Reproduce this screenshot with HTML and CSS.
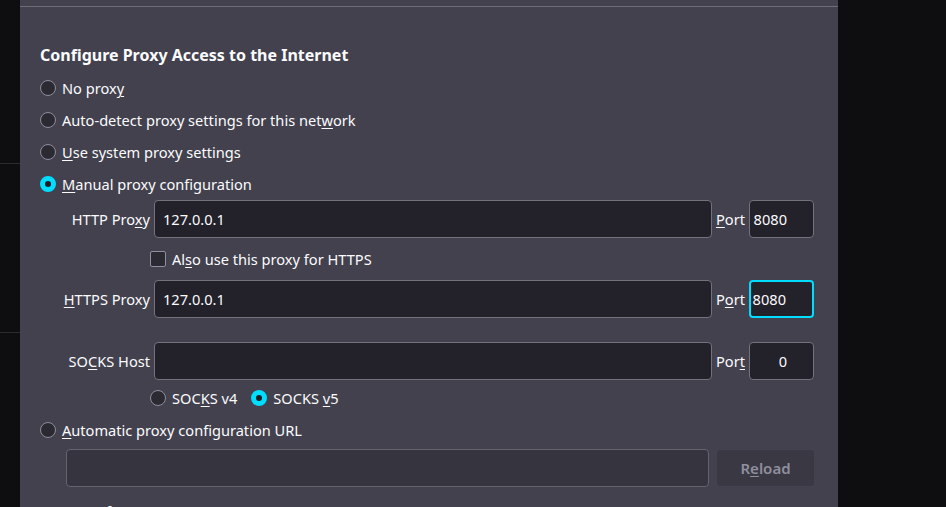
FILE: index.html
```html
<!DOCTYPE html>
<html lang="en">
<head>
    <meta charset="UTF-8">
    <meta name="viewport" content="width=device-width, initial-scale=1.0">
    <title>Connection Settings</title>
    <link rel="stylesheet" href="styles.css">
</head>
<body>
    <div class="page">
        <div class="gutter">
            <div class="gutter-row"></div>
            <div class="gutter-row"></div>
        </div>
        <div class="dialog">
            <div class="topbar"></div>
            <div class="content">
                <h2 class="title">Configure Proxy Access to the Internet</h2>
                <div class="options">
                    <label class="option"><span class="radio"></span><span>No prox<u>y</u></span></label>
                    <label class="option"><span class="radio"></span><span>Auto-detect proxy settings for this net<u>w</u>ork</span></label>
                    <label class="option"><span class="radio"></span><span><u>U</u>se system proxy settings</span></label>
                    <label class="option"><span class="radio checked"></span><span><u>M</u>anual proxy configuration</span></label>
                </div>
                <div class="proxy-grid">
                    <span class="field-label">HTTP Pro<u>x</u>y</span>
                    <div class="input">127.0.0.1</div>
                    <span class="port-label"><u>P</u>ort</span>
                    <div class="input port">8080</div>

                    <label class="check-row"><span class="checkbox"></span><span>Al<u>s</u>o use this proxy for HTTPS</span></label>

                    <span class="field-label"><u>H</u>TTPS Proxy</span>
                    <div class="input">127.0.0.1</div>
                    <span class="port-label">P<u>o</u>rt</span>
                    <div class="input port focused"><span>8080</span><span class="caret"></span></div>

                    <div class="spacer"></div>

                    <span class="field-label">SO<u>C</u>KS Host</span>
                    <div class="input"></div>
                    <span class="port-label">Por<u>t</u></span>
                    <div class="input port">0</div>

                    <div class="socks-row">
                        <label class="option small"><span class="radio"></span><span>SOC<u>K</u>S v4</span></label>
                        <label class="option small"><span class="radio checked"></span><span>SOCKS <u>v</u>5</span></label>
                    </div>
                </div>
                <label class="option auto"><span class="radio"></span><span><u>A</u>utomatic proxy configuration URL</span></label>
                <div class="url-row">
                    <div class="input disabled"></div>
                    <button class="reload">R<u>e</u>load</button>
                </div>
                <p class="no-proxy">No proxy for</p>
            </div>
        </div>
    </div>
</body>
</html>
```

FILE: styles.css
```css
html, body {
    margin: 0;
    padding: 0;
    height: 100%;
    overflow: hidden;
}
body {
    background-color: #0e0e10;
    color: #fbfbfe;
    font-family: "Noto Sans", "DejaVu Sans", sans-serif;
    font-size: 14.6px;
}
u {
    text-decoration-thickness: 1px;
    text-underline-offset: 2px;
}
.page {
    display: flex;
    height: 507px;
}
.gutter {
    width: 20px;
    padding-top: 163px;
}
.gutter-row {
    height: 168px;
    border-top: 1px solid #2a2a2f;
}
.dialog {
    width: 818px;
    background-color: #42414d;
    overflow: hidden;
}
.topbar {
    height: 6px;
    border-bottom: 1px solid #6f6e78;
}
.content {
    padding-left: 20px;
}
.title {
    margin: 38px 0 0;
    font-size: 16px;
    line-height: 20px;
    font-weight: 700;
}
.options {
    margin-top: 7px;
}
.option {
    display: flex;
    align-items: center;
    height: 32px;
    gap: 6px;
    white-space: nowrap;
}
.radio {
    box-sizing: border-box;
    width: 16px;
    height: 16px;
    border-radius: 50%;
    border: 1px solid #8f8f9d;
    background-color: #2b2a33;
    flex: none;
}
.radio.checked {
    border: 5px solid #00ddff;
    background-color: #1c1b22;
}
.proxy-grid {
    display: grid;
    width: 752px;
    margin-left: 22px;
    grid-template-columns: 88px 1fr auto 65px;
    grid-template-rows: 38px 42px 38px 24px 38px 36px;
    column-gap: 4px;
    align-items: center;
}
.field-label {
    text-align: right;
    white-space: nowrap;
}
.port-label {
    text-align: left;
    white-space: nowrap;
}
.input {
    box-sizing: border-box;
    height: 38px;
    border: 1px solid #74737d;
    border-radius: 4px;
    background-color: #23222b;
    padding: 0 8px;
    display: flex;
    align-items: center;
}
.input.port {
    justify-content: flex-end;
    padding: 0 26px 0 2px;
}
.input.focused {
    border: 2px solid #00ddff;
    padding-right: 25px;
}
.caret {
    width: 1px;
    height: 20px;
    background-color: #fbfbfe;
    margin-left: 1px;
}
.check-row {
    grid-column: 2 / 5;
    margin-left: -4px;
    display: flex;
    align-items: center;
    gap: 6px;
}
.checkbox {
    box-sizing: border-box;
    width: 16px;
    height: 16px;
    border: 1px solid #8f8f9d;
    border-radius: 2px;
    background-color: #2b2a33;
}
.spacer {
    grid-column: 1 / 5;
}
.socks-row {
    grid-column: 2 / 5;
    margin-left: -4px;
    display: flex;
    gap: 14px;
}
.option.small {
    height: 36px;
}
.option.auto {
    height: 28px;
}
.url-row {
    display: flex;
    gap: 8px;
    margin: 5px 0 0 26px;
    width: 748px;
}
.input.disabled {
    flex: 1;
    background-color: #35343f;
    border-color: #64636d;
}
.reload {
    width: 97px;
    height: 36px;
    margin-top: 1px;
    border: none;
    border-radius: 4px;
    background-color: #393843;
    color: #8f8f9d;
    font-family: inherit;
    font-size: 15px;
    font-weight: 600;
}
.no-proxy {
    margin: 14px 0 0;
    line-height: 20px;
}
```
